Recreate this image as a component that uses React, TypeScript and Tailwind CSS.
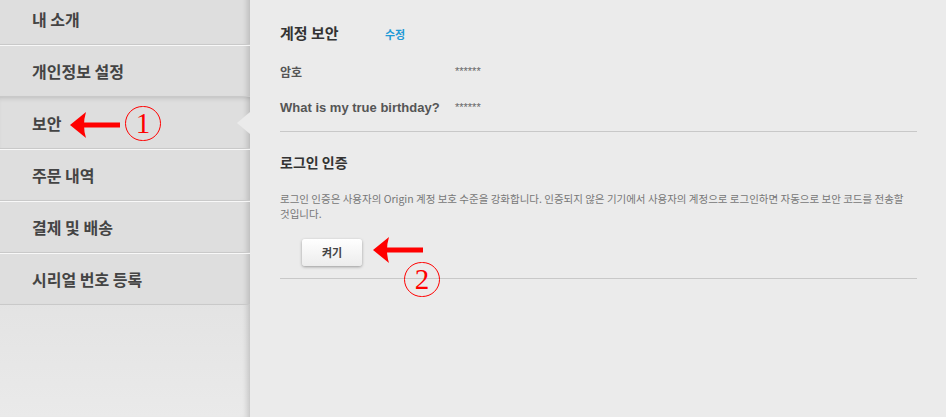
import React from "react";

const KO = { fontFamily: '"Noto Sans CJK KR", "Noto Sans", sans-serif' };
const MIX = { fontFamily: '"Liberation Sans", "Noto Sans CJK KR", sans-serif' };

const MENU = ["내 소개", "개인정보 설정", "보안", "주문 내역", "결제 및 배송", "시리얼 번호 등록"];

function RedArrow({ className }: { className?: string }) {
  return (
    <svg className={className} width="50" height="30" viewBox="0 0 50 30">
      <rect x="14" y="12.5" width="36" height="5" fill="#f00" />
      <path d="M0 15 L16 2 Q12 15 16 28 Z" fill="#f00" />
    </svg>
  );
}

function Circled({ n, className }: { n: string; className?: string }) {
  return (
    <div
      className={`flex h-[35px] w-[36px] items-center justify-center rounded-full border-[1.5px] border-[#f00] text-[29px] leading-none text-[#f00] ${className ?? ""}`}
      style={{ fontFamily: '"Liberation Serif", serif' }}
    >
      {n}
    </div>
  );
}

export default function App() {
  return (
    <div className="relative flex h-[417px] w-[946px] overflow-hidden bg-[#ebebeb]" style={KO}>
      {/* 사이드바 */}
      <div className="relative flex w-[250px] shrink-0 flex-col bg-gradient-to-b from-[#dedede] via-[#dedede] to-[#eaeaea] shadow-[inset_-7px_0_6px_-5px_rgba(0,0,0,0.18)]">
        <div className="-mt-[7px] flex flex-col">
          {MENU.map((label, i) => {
            const active = i === 2;
            return (
              <div
                key={label}
                className={`relative flex h-[52px] items-center border-b border-[#c9c9c9] pl-[32px] bg-[#dedede] ${
                  active
                    ? "shadow-[inset_-7px_0_6px_-5px_rgba(0,0,0,0.18),inset_0_4px_5px_-3px_rgba(0,0,0,0.15)]"
                    : "shadow-[inset_-7px_0_6px_-5px_rgba(0,0,0,0.18)]"
                }`}
              >
                {!active && <div className="absolute inset-x-0 top-0 h-px bg-white/80" />}
                <span className="text-[16px] font-bold text-[#444]">{label}</span>
                {active && (
                  <div className="absolute right-0 top-1/2 h-0 w-0 -translate-y-1/2 border-y-[11px] border-r-[13px] border-y-transparent border-r-[#ebebeb]" />
                )}
              </div>
            );
          })}
        </div>
      </div>

      {/* 본문 */}
      <div className="flex w-[667px] flex-col pl-[30px] pt-[22px]">
        <div className="flex items-baseline">
          <h2 className="w-[105px] text-[15px] font-bold text-[#333]">계정 보안</h2>
          <span className="text-[11px] font-bold text-[#1e9ad6]">수정</span>
        </div>

        <div className="mt-[18px] flex flex-col gap-[17px]">
          <div className="flex items-center">
            <span className="w-[175px] text-[12px] font-bold text-[#555]">암호</span>
            <span className="text-[11px] text-[#666]" style={MIX}>******</span>
          </div>
          <div className="flex items-center">
            <span className="w-[175px] text-[13px] font-bold text-[#555]" style={MIX}>
              What is my true birthday?
            </span>
            <span className="text-[11px] text-[#666]" style={MIX}>******</span>
          </div>
        </div>

        <div className="mt-[14px] h-px bg-[#c8c8c8]" />

        <h2 className="mt-[20px] text-[14px] font-bold text-[#333]">로그인 인증</h2>

        <p className="mt-[18px] pr-[4px] text-[10.5px] leading-[15px] text-[#777]">
          로그인 인증은 사용자의 Origin 계정 보호 수준을 강화합니다. 인증되지 않은 기기에서 사용자의 계정으로 로그인하면 자동으로 보안 코드를 전송할 것입니다.
        </p>

        <div className="mt-[17px] pl-[22px]">
          <button className="h-[27px] w-[60px] rounded-[3px] bg-gradient-to-b from-white to-[#ececec] text-[11px] font-bold text-[#444] shadow-[0_1px_3px_rgba(0,0,0,0.35)]">
            켜기
          </button>
        </div>

        <div className="mt-[12px] h-px bg-[#c8c8c8]" />
      </div>

      {/* 주석 화살표 */}
      <RedArrow className="absolute left-[70px] top-[110px]" />
      <Circled n="1" className="absolute left-[125px] top-[106px]" />
      <RedArrow className="absolute left-[373px] top-[235px]" />
      <Circled n="2" className="absolute left-[404px] top-[262px]" />
    </div>
  );
}
